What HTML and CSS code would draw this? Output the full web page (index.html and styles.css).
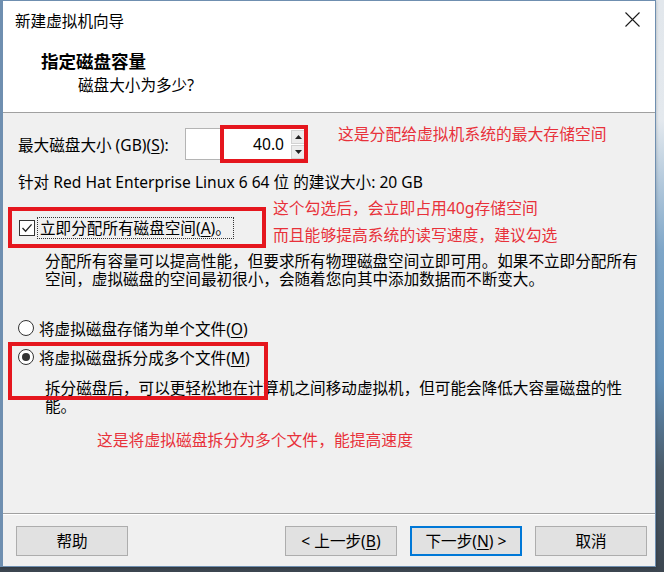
FILE: index.html
```html
<!doctype html>
<html lang="zh-CN">
<head>
	<meta charset="UTF-8">
	<title>新建虚拟机向导</title>
	<link rel="stylesheet" href="styles.css">
</head>
<body>
	<div class="window">
		<div class="head">
			<div class="titlebar">
				<span class="title">新建虚拟机向导</span>
				<svg class="close" width="15" height="15" viewBox="0 0 15 15">
					<path d="M0.5 0.5 L14.5 14.5 M14.5 0.5 L0.5 14.5" stroke="#1a1a1a" stroke-width="1.1" fill="none"/>
				</svg>
			</div>
			<div class="intro">
				<div class="intro-title">指定磁盘容量</div>
				<div class="intro-sub">磁盘大小为多少?</div>
			</div>
		</div>

		<div class="main">
			<div class="size-row">
				<span class="size-label">最大磁盘大小 (GB)(<u>S</u>):</span>
				<div class="spin">
					<span class="spin-val">40.0</span>
					<div class="spin-btns">
						<span class="spin-btn"><svg width="7" height="4" viewBox="0 0 7 4"><path d="M0 4 L3.5 0 L7 4 Z" fill="#222"/></svg></span>
						<span class="spin-btn"><svg width="7" height="4" viewBox="0 0 7 4"><path d="M0 0 L3.5 4 L7 0 Z" fill="#222"/></svg></span>
					</div>
				</div>
			</div>
			<p class="rec">针对 Red Hat Enterprise Linux 6 64 位 的建议大小: 20 GB</p>

			<div class="opt">
				<span class="checkbox">
					<svg width="14" height="14" viewBox="0 0 14 14"><path d="M2.5 7 L5.6 10.2 L11.6 3.4" stroke="#222" stroke-width="1.3" fill="none"/></svg>
				</span>
				<span class="focus">立即分配所有磁盘空间(<u>A</u>)。</span>
			</div>
			<p class="desc desc-first">分配所有容量可以提高性能，但要求所有物理磁盘空间立即可用。如果不立即分配所有<br>空间，虚拟磁盘的空间最初很小，会随着您向其中添加数据而不断变大。</p>

			<div class="opt radio-first">
				<span class="radio"></span>
				<span>将虚拟磁盘存储为单个文件(<u>O</u>)</span>
			</div>
			<div class="opt radio-second">
				<span class="radio on"></span>
				<span>将虚拟磁盘拆分成多个文件(<u>M</u>)</span>
			</div>
			<p class="desc">拆分磁盘后，可以更轻松地在计算机之间移动虚拟机，但可能会降低大容量磁盘的性<br>能。</p>
		</div>

		<div class="foot">
			<button class="btn">帮助</button>
			<div class="spacer"></div>
			<button class="btn">&lt; 上一步(<u>B</u>)</button>
			<button class="btn primary">下一步(<u>N</u>) &gt;</button>
			<button class="btn">取消</button>
		</div>

		<!-- 截图上的红色标注 -->
		<div class="mark mark-size"></div>
		<div class="mark mark-check"></div>
		<div class="mark mark-split"></div>
		<div class="note note-size">这是分配给虚拟机系统的最大存储空间</div>
		<div class="note note-check1">这个勾选后，会立即占用40g存储空间</div>
		<div class="note note-check2">而且能够提高系统的读写速度，建议勾选</div>
		<div class="note note-split">这是将虚拟磁盘拆分为多个文件，能提高速度</div>
	</div>
</body>
</html>
```

FILE: styles.css
```css
* {
	box-sizing: border-box;
}
html, body {
	margin: 0;
	padding: 0;
}
body {
	width: 664px;
	height: 572px;
	overflow: hidden;
	font-family: "Noto Sans", "Noto Sans CJK SC", sans-serif;
	font-size: 15.6px;
	color: #000;
	background: linear-gradient(to bottom, #e2e7ec 0, #e4e9ee 120px, #7ea6c8 250px, #5f8fb8 380px, #4b5b69 470px, #3c4650 572px);
}
u {
	text-decoration: underline;
	text-underline-offset: 2px;
}
.window {
	position: relative;
	width: 656px;
	height: 567px;
	border: 1px solid #6f8fb0;
	border-left-width: 3px;
	display: flex;
	flex-direction: column;
	background: #f0f0f0;
	box-shadow: 0 1px 3px rgba(0,0,0,.25);
}

/* 标题和说明区 */
.head {
	background: #fff;
	border-bottom: 1px solid #a0a0a0;
	height: 112px;
}
.titlebar {
	height: 39px;
	display: flex;
	align-items: center;
	padding: 0 15px 0 12px;
}
.title {
	flex: 1;
	line-height: 20px;
}
.close {
	margin-top: -2px;
}
.intro {
	padding-left: 38px;
}
.intro-title {
	font-weight: bold;
	font-size: 17.5px;
	line-height: 22px;
	margin-top: 10px;
}
.intro-sub {
	line-height: 20px;
	margin-top: 3px;
	padding-left: 37px;
}

/* 主体 */
.main {
	flex: 1;
	padding-left: 15px;
	border-bottom: 1px solid #a0a0a0;
}
.size-row {
	display: flex;
	align-items: center;
	margin-top: 15px;
	height: 32px;
}
.size-label {
	width: 167px;
	white-space: nowrap;
}
.spin {
	width: 123px;
	height: 32px;
	background: #fff;
	border: 1px solid #b4b4b4;
	display: flex;
	align-items: center;
	justify-content: flex-end;
	padding-right: 1px;
}
.spin-val {
	margin-right: 7px;
}
.spin-btns {
	display: flex;
	flex-direction: column;
	gap: 1px;
}
.spin-btn {
	width: 15px;
	height: 14px;
	background: #ececec;
	border: 1px solid #d2d2d2;
	display: flex;
	align-items: center;
	justify-content: center;
}
.rec {
	margin: 12px 0 0;
	line-height: 20px;
}
.opt {
	display: flex;
	align-items: center;
	height: 22px;
	margin-top: 25px;
}
.checkbox {
	width: 16px;
	height: 16px;
	border: 1px solid #333;
	background: #fff;
	margin-left: 1px;
	display: flex;
	align-items: center;
	justify-content: center;
}
.focus {
	margin-left: 2px;
	padding: 0 2px;
	line-height: 20px;
	border: 1px dotted #333;
}
.desc {
	margin: 13px 0 0 27px;
	line-height: 18px;
}
.radio-first {
	margin-top: 29px;
}
.radio-second {
	margin-top: 7px;
}
.radio {
	width: 16px;
	height: 16px;
	border: 1px solid #333;
	border-radius: 50%;
	background: #fff;
	margin-right: 5px;
	display: flex;
	align-items: center;
	justify-content: center;
}
.radio.on::after {
	content: "";
	width: 8px;
	height: 8px;
	border-radius: 50%;
	background: #333;
}
.radio-second + .desc {
	margin-top: 11px;
}

/* 底部按钮 */
.foot {
	height: 52px;
	border-top: 1px solid #fff;
	display: flex;
	align-items: flex-start;
	gap: 13px;
	padding: 11px 8px 0 13px;
}
.spacer {
	flex: 1;
}
.btn {
	width: 112px;
	height: 30px;
	font-family: inherit;
	font-size: 15.6px;
	color: #000;
	background: #e1e1e1;
	border: 1px solid #adadad;
	padding: 0;
	line-height: 26px;
}
.btn.primary {
	border: 2px solid #0078d7;
}

/* 红色标注 */
.mark {
	position: absolute;
	border: 4px solid #e5161e;
}
.mark-size {
	left: 217px;
	top: 124px;
	width: 88px;
	height: 38px;
}
.mark-check {
	left: 5px;
	top: 206px;
	width: 258px;
	height: 41px;
}
.mark-split {
	left: 5px;
	top: 341px;
	width: 260px;
	height: 58px;
}
.note {
	position: absolute;
	color: #e8313a;
	font-size: 15.8px;
	line-height: 20px;
	white-space: nowrap;
}
.note-size {
	left: 335px;
	top: 123px;
}
.note-check1 {
	left: 270px;
	top: 197px;
}
.note-check2 {
	left: 270px;
	top: 224px;
}
.note-split {
	left: 94px;
	top: 429px;
}
```
